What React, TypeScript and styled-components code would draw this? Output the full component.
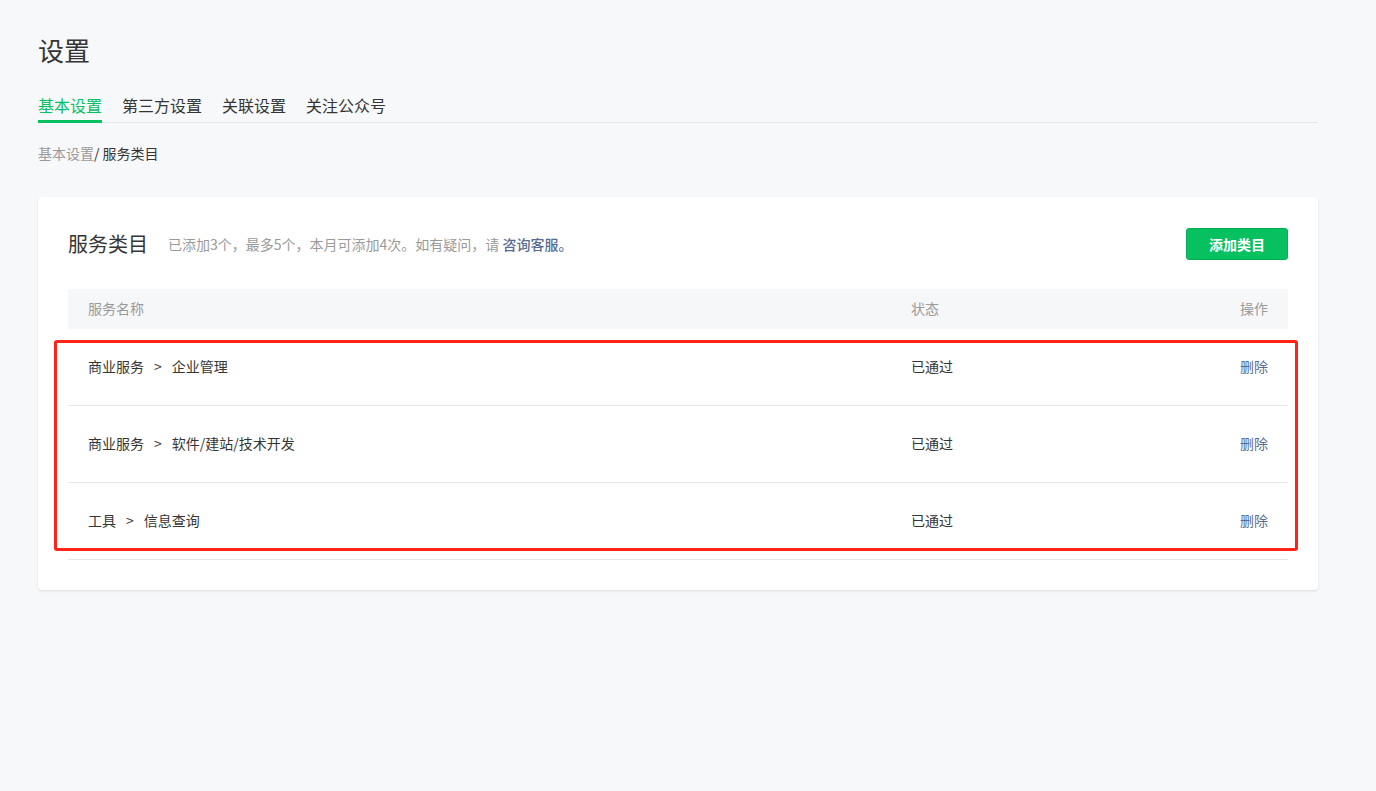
import React from "react";
import styled, { createGlobalStyle } from "styled-components";

const GlobalStyle = createGlobalStyle`
  html, body {
    margin: 0;
    padding: 0;
    background: #f7f8fa;
    font-family: "Noto Sans CJK SC", "Noto Sans", "Liberation Sans", sans-serif;
    color: #353535;
  }
`;

const Page = styled.div`
  padding: 30px 58px 40px 38px;
`;

const PageTitle = styled.h1`
  margin: 0;
  font-size: 26px;
  line-height: 40px;
  font-weight: 400;
  color: #353535;
`;

const TabBar = styled.div`
  display: flex;
  gap: 20px;
  margin-top: 23px;
  border-bottom: 1px solid #e4e6eb;
`;

const Tab = styled.div<{ $active?: boolean }>`
  font-size: 16px;
  line-height: 24px;
  padding-bottom: 3px;
  margin-bottom: -1px;
  color: ${(p) => (p.$active ? "#07c160" : "#353535")};
  border-bottom: 3px solid ${(p) => (p.$active ? "#07c160" : "transparent")};
  cursor: pointer;
`;

const Crumbs = styled.div`
  margin-top: 20px;
  font-size: 14px;
  line-height: 20px;
  color: #353535;

  span {
    color: #9a9a9a;
  }
`;

const Card = styled.div`
  margin-top: 34px;
  background: #fff;
  border-radius: 4px;
  box-shadow: 0 1px 2px rgba(150, 150, 150, 0.3);
  padding: 31px 30px 30px;
`;

const CardHead = styled.div`
  display: flex;
  align-items: center;
  height: 32px;
`;

const CardTitle = styled.h2`
  margin: 0 0 1px;
  font-size: 20px;
  font-weight: 400;
  color: #353535;
`;

const Tips = styled.p`
  margin: 0 0 1px 20px;
  font-size: 14px;
  color: #9a9a9a;
  flex: 1;

  a {
    color: #576b95;
    text-decoration: none;
    font-weight: 500;
  }
`;

const GreenButton = styled.button`
  width: 102px;
  height: 32px;
  border: 1px solid #06ae56;
  border-radius: 3px;
  background: #07c160;
  color: #fff;
  font-family: inherit;
  font-size: 14px;
  font-weight: 700;
  cursor: pointer;
`;

const Table = styled.div`
  margin-top: 29px;
`;

const Row = styled.div<{ $head?: boolean }>`
  display: grid;
  grid-template-columns: 1fr 257px 100px;
  align-items: center;
  box-sizing: border-box;
  padding: 0 20px 2px;
  height: ${(p) => (p.$head ? "40px" : "77px")};
  font-size: 14px;
  color: ${(p) => (p.$head ? "#9a9a9a" : "#353535")};
  background: ${(p) => (p.$head ? "#f6f7f9" : "#fff")};
  border-bottom: ${(p) => (p.$head ? "none" : "1px solid #e7e7eb")};
`;

const Cell = styled.div<{ $right?: boolean }>`
  text-align: ${(p) => (p.$right ? "right" : "left")};
`;

const Arrow = styled.span`
  margin: 0 10px;
`;

const DeleteLink = styled.a`
  color: #576b95;
  cursor: pointer;
`;

const Body = styled.div`
  position: relative;
`;

const Highlight = styled.div`
  position: absolute;
  left: -14px;
  top: 11px;
  width: 1244px;
  height: 211px;
  box-sizing: border-box;
  border: 3px solid #fe2418;
  border-radius: 3px;
  pointer-events: none;
`;

const rows = [
  { path: ["商业服务", "企业管理"], status: "已通过" },
  { path: ["商业服务", "软件/建站/技术开发"], status: "已通过" },
  { path: ["工具", "信息查询"], status: "已通过" },
];

export default function App() {
  return (
    <>
      <GlobalStyle />
      <Page>
        <PageTitle>设置</PageTitle>
        <TabBar>
          <Tab $active>基本设置</Tab>
          <Tab>第三方设置</Tab>
          <Tab>关联设置</Tab>
          <Tab>关注公众号</Tab>
        </TabBar>
        <Crumbs>
          <span>基本设置</span>/ 服务类目
        </Crumbs>
        <Card>
          <CardHead>
            <CardTitle>服务类目</CardTitle>
            <Tips>
              已添加3个，最多5个，本月可添加4次。如有疑问，请 <a href="#">咨询客服。</a>
            </Tips>
            <GreenButton>添加类目</GreenButton>
          </CardHead>
          <Table>
            <Row $head>
              <Cell>服务名称</Cell>
              <Cell>状态</Cell>
              <Cell $right>操作</Cell>
            </Row>
            <Body>
              {rows.map((r, i) => (
                <Row key={i}>
                  <Cell>
                    {r.path[0]}
                    <Arrow>&gt;</Arrow>
                    {r.path[1]}
                  </Cell>
                  <Cell>{r.status}</Cell>
                  <Cell $right>
                    <DeleteLink>删除</DeleteLink>
                  </Cell>
                </Row>
              ))}
              <Highlight />
            </Body>
          </Table>
        </Card>
      </Page>
    </>
  );
}
